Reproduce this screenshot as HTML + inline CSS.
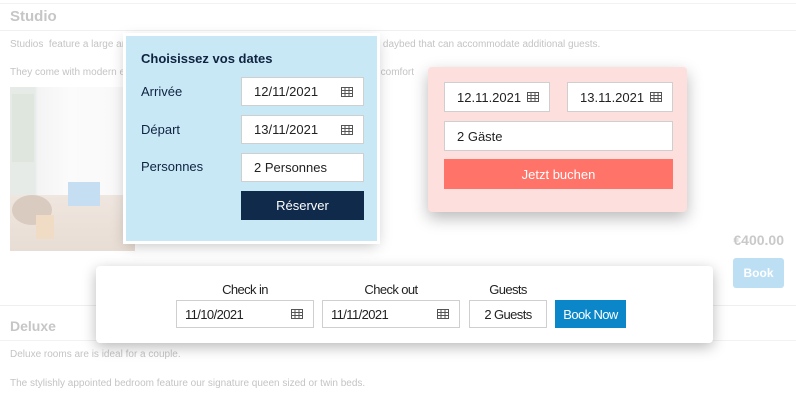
<!DOCTYPE html>
<html><head><meta charset="utf-8"><style>
*{box-sizing:border-box;margin:0;padding:0}
body{width:796px;height:404px;overflow:hidden;background:#fff;font-family:"Liberation Sans",Arial,sans-serif;position:relative}
.abs{position:absolute}
.bgt{color:#c4c4c4;font-size:10px;white-space:nowrap}
.inp{position:absolute;background:#fff;border:1px solid #cfcfcf;font-size:13px;color:#222;display:flex;align-items:center;padding-left:12px}
.cal{position:absolute;right:10px;top:50%;margin-top:-5px;width:12px;height:10px}
.lab{position:absolute;font-size:13px;color:#0f2340}
.bt{font-size:13px;letter-spacing:-.6px}
</style></head><body>
<div class="abs" style="left:0;top:3px;width:796px;height:1px;background:#f2f2f2"></div>
<div class="abs" style="left:10px;top:8px;font-size:15px;font-weight:bold;color:#c6c6c6">Studio</div>
<div class="abs" style="left:0;top:30px;width:796px;height:1px;background:#f0f0f0"></div>
<div class="abs bgt" style="left:10px;top:39px">Studios &nbsp;feature a large and ........................................................................................ daybed that can accommodate additional guests.</div>
<div class="abs bgt" style="left:10px;top:67px">They come with modern en .................................................................................... te comfort</div>
<div class="abs" style="left:10px;top:87px;width:125px;height:164px;background:linear-gradient(90deg,#e6ebe8 0,#e6ebe8 25px,#f4f4f4 28px,#fbfbfb 60px,#f8f8f8 100%)"></div>
<div class="abs" style="left:12px;top:94px;width:22px;height:68px;background:#dfe6de"></div>
<div class="abs" style="left:10px;top:195px;width:125px;height:56px;background:linear-gradient(180deg,#efe6df,#e8ddd4)"></div>
<div class="abs" style="left:12px;top:195px;width:40px;height:30px;border-radius:50%;background:#d9cbc0"></div>
<div class="abs" style="left:68px;top:182px;width:32px;height:24px;background:#c6def2"></div>
<div class="abs" style="left:36px;top:215px;width:18px;height:24px;background:#f0dcc4"></div>
<div class="abs" style="left:684px;width:100px;text-align:right;top:232px;font-size:14px;font-weight:bold;color:#c9c9c9">€400.00</div>
<div class="abs" style="left:733px;top:258px;width:51px;height:30px;background:#bcdff4;border-radius:3px;color:#fff;font-size:12px;font-weight:bold;display:flex;align-items:center;justify-content:center">Book</div>
<div class="abs" style="left:0;top:305px;width:796px;height:1px;background:#efefef"></div>
<div class="abs" style="left:10px;top:318px;font-size:14px;font-weight:bold;color:#c6c6c6">Deluxe</div>
<div class="abs" style="left:0;top:340px;width:796px;height:1px;background:#f2f2f2"></div>
<div class="abs bgt" style="left:10px;top:349px">Deluxe rooms are is ideal for a couple.</div>
<div class="abs bgt" style="left:10px;top:378px">The stylishly appointed bedroom feature our signature queen sized or twin beds.</div>

<svg width="0" height="0" style="position:absolute"><defs><g id="c"><rect x="0.5" y="0.5" width="11" height="9" fill="none" stroke="#555"/><path d="M0 3.5H12M0 6.5H12M4 0V10M8 0V10" stroke="#555" stroke-width="1"/></g></defs></svg>

<div class="abs" style="left:126px;top:36px;width:251px;height:205px;background:#c9e8f6;box-shadow:0 0 0 3px #fff,0 4px 14px rgba(0,0,0,.25)"></div>
<div class="abs" style="left:141px;top:51px;font-size:13px;font-weight:bold;color:#0f2340">Choisissez vos dates</div>
<div class="lab" style="left:141px;top:84px">Arrivée</div>
<div class="lab" style="left:141px;top:122px">Départ</div>
<div class="lab" style="left:141px;top:159px">Personnes</div>
<div class="inp" style="left:241px;top:77px;width:123px;height:29px">12/11/2021<svg class="cal" viewBox="0 0 12 10"><use href="#c"/></svg></div>
<div class="inp" style="left:241px;top:115px;width:123px;height:29px">13/11/2021<svg class="cal" viewBox="0 0 12 10"><use href="#c"/></svg></div>
<div class="inp" style="left:241px;top:153px;width:123px;height:29px">2 Personnes</div>
<div class="abs" style="left:241px;top:191px;width:123px;height:29px;background:#0f2a4a;color:#fff;font-size:13px;display:flex;align-items:center;justify-content:center">Réserver</div>

<div class="abs" style="left:428px;top:67px;width:259px;height:145px;background:#fde0dd;border-radius:4px;box-shadow:0 6px 16px rgba(0,0,0,.28)"></div>
<div class="inp" style="left:444px;top:82px;width:106px;height:30px">12.11.2021<svg class="cal" viewBox="0 0 12 10"><use href="#c"/></svg></div>
<div class="inp" style="left:567px;top:82px;width:106px;height:30px">13.11.2021<svg class="cal" viewBox="0 0 12 10"><use href="#c"/></svg></div>
<div class="inp" style="left:444px;top:121px;width:229px;height:30px">2 Gäste</div>
<div class="abs" style="left:444px;top:159px;width:229px;height:30px;background:#ff7369;color:#fff;font-size:13px;display:flex;align-items:center;justify-content:center">Jetzt buchen</div>

<div class="abs" style="left:96px;top:266px;width:617px;height:77px;background:#fff;border-radius:4px;box-shadow:0 4px 14px rgba(0,0,0,.28)"></div>
<div class="abs bt" style="left:176px;top:282px;width:138px;text-align:center;color:#222">Check in</div>
<div class="abs bt" style="left:322px;top:282px;width:138px;text-align:center;color:#222">Check out</div>
<div class="abs bt" style="left:469px;top:282px;width:78px;text-align:center;color:#222">Guests</div>
<div class="inp bt" style="left:176px;top:300px;width:138px;height:28px;padding-left:8px">11/10/2021<svg class="cal" viewBox="0 0 12 10"><use href="#c"/></svg></div>
<div class="inp bt" style="left:322px;top:300px;width:138px;height:28px;padding-left:8px">11/11/2021<svg class="cal" viewBox="0 0 12 10"><use href="#c"/></svg></div>
<div class="inp bt" style="left:469px;top:300px;width:78px;height:28px;padding-left:0;justify-content:center">2 Guests</div>
<div class="abs bt" style="left:555px;top:300px;width:71px;height:28px;background:#0a86c9;color:#fff;display:flex;align-items:center;justify-content:center">Book Now</div>
</body></html>
